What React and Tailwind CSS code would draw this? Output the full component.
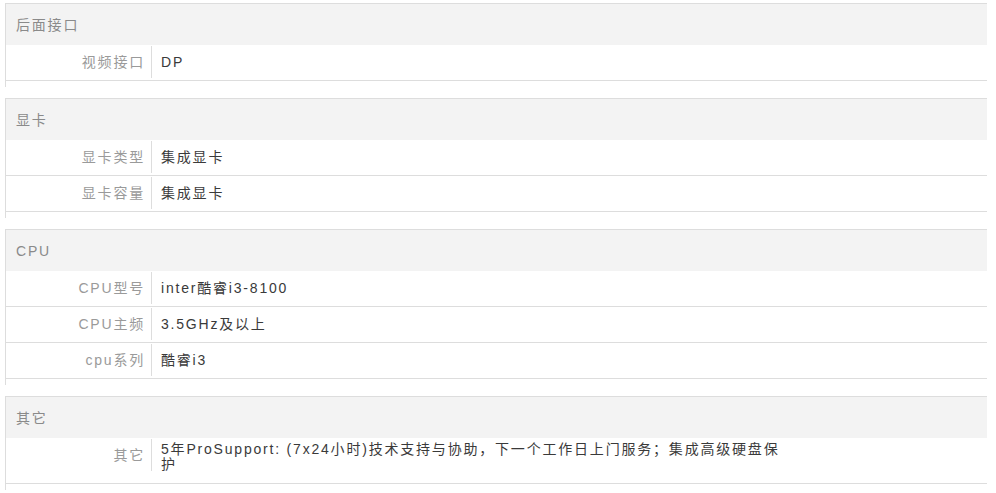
const sections = [
  {
    title: "后面接口",
    rows: [{ label: "视频接口", value: "DP" }],
  },
  {
    title: "显卡",
    rows: [
      { label: "显卡类型", value: "集成显卡" },
      { label: "显卡容量", value: "集成显卡" },
    ],
  },
  {
    title: "CPU",
    rows: [
      { label: "CPU型号", value: "inter酷睿i3-8100" },
      { label: "CPU主频", value: "3.5GHz及以上" },
      { label: "cpu系列", value: "酷睿i3" },
    ],
  },
  {
    title: "其它",
    rows: [
      {
        label: "其它",
        value: "5年ProSupport: (7x24小时)技术支持与协助，下一个工作日上门服务；集成高级硬盘保护",
        multi: true,
      },
    ],
  },
];

const SpecRow = ({ label, value, multi }) => (
  <div className="flex items-start border-b border-[#dddddd] pt-[1px] pb-[2px]">
    <div className="h-[32px] w-[146px] shrink-0 border-r border-[#dddddd] pr-[6px] text-right leading-[32px] text-[#9a9a9a]">
      {label}
    </div>
    {multi ? (
      <div className="max-w-[628px] pl-[9px] pt-[3px] pb-[9px] leading-[15px] text-[#3a3a3a]">{value}</div>
    ) : (
      <div className="flex h-[32px] items-center pl-[9px] leading-[15px] text-[#3a3a3a]">{value}</div>
    )}
  </div>
);

export default function App() {
  return (
    <main
      className="min-h-screen bg-white pt-[3px] pl-[5px] pr-[9px] text-[14px] tracking-[1.8px]"
      style={{ fontFamily: '"Liberation Sans", "Noto Sans CJK SC", sans-serif' }}
    >
      {sections.map((section) => (
        <section key={section.title} className="mb-[11px] border-t border-l border-[#dddddd] pb-[6px]">
          <h2 className="h-[41px] bg-[#f3f3f3] pl-[10px] leading-[42px] font-normal text-[#8a8a8a]">{section.title}</h2>
          {section.rows.map((row) => (
            <SpecRow key={row.label} {...row} />
          ))}
        </section>
      ))}
    </main>
  );
}
